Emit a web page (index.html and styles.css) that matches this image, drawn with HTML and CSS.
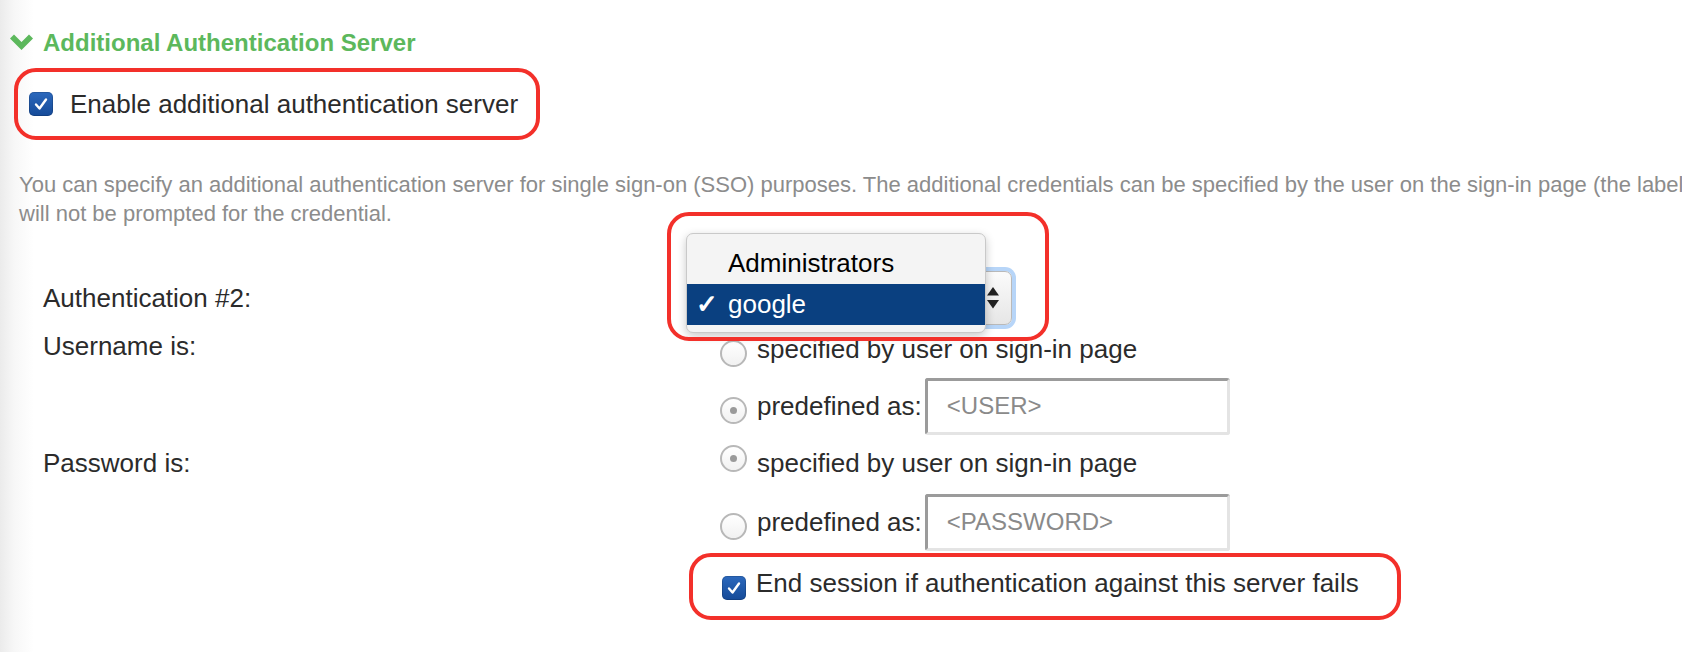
FILE: index.html
```html
<!DOCTYPE html>
<html lang="en">
<head>
<meta charset="utf-8">
<title>Additional Authentication Server</title>
<link rel="stylesheet" href="styles.css">
</head>
<body>
<div class="page">
  <div class="section-head">
    <svg class="chevron" width="23" height="16" viewBox="0 0 23 16"><polygon points="0,4.5 4,0.5 11.5,8 19,0.5 23,4.5 11.5,16" fill="#5cb85c"/></svg>
    <span class="section-title">Additional Authentication Server</span>
  </div>

  <div class="enable-box">
    <span class="checkbox"><svg width="24" height="24" viewBox="0 0 24 24"><polyline points="7,12.5 10.5,16.5 17,7.5" fill="none" stroke="#fff" stroke-width="2.4" stroke-linecap="round" stroke-linejoin="round"/></svg></span>
    <span class="enable-label">Enable additional authentication server</span>
  </div>

  <p class="desc">You can specify an additional authentication server for single sign-on (SSO) purposes. The additional credentials can be specified by the user on the sign-in page (the label is specified below) or predefined, in which case the user<br>will not be prompted for the credential.</p>

  <div class="form">
    <div class="label r1">Authentication #2:</div>
    <div class="control r1">
      <div class="select"><span class="arrows"><svg width="12" height="22" viewBox="0 0 12 22"><polygon points="6,0 12,8.5 0,8.5" fill="#222"/><polygon points="0,13 12,13 6,21.5" fill="#222"/></svg></span></div>
    </div>

    <div class="label r2">Username is:</div>
    <div class="control r2">
      <span class="radio"></span><span class="opt">specified by user on sign-in page</span>
    </div>
    <div class="control r3">
      <span class="radio checked"></span><span class="opt">predefined as:</span>
      <div class="text-input">&lt;USER&gt;</div>
    </div>

    <div class="label r4">Password is:</div>
    <div class="control r4">
      <span class="radio checked up"></span><span class="opt">specified by user on sign-in page</span>
    </div>
    <div class="control r5">
      <span class="radio"></span><span class="opt">predefined as:</span>
      <div class="text-input">&lt;PASSWORD&gt;</div>
    </div>

    <div class="control r6">
      <span class="checkbox small"><svg width="24" height="24" viewBox="0 0 24 24"><polyline points="7,12.5 10.5,16.5 17,7.5" fill="none" stroke="#fff" stroke-width="2.4" stroke-linecap="round" stroke-linejoin="round"/></svg></span>
      <span class="opt end">End session if authentication against this server fails</span>
    </div>

    <div class="popup">
      <div class="popup-item">Administrators</div>
      <div class="popup-item selected"><span class="tick">✓</span>google</div>
    </div>
    <div class="mark mark-select"></div>
    <div class="mark mark-end"></div>
  </div>
</div>
</body>
</html>
```

FILE: styles.css
```css
* { box-sizing: border-box; }

html, body {
  margin: 0;
  padding: 0;
  height: 100%;
}

body {
  font-family: "Liberation Sans", Helvetica, Arial, sans-serif;
  color: #333;
  background: linear-gradient(to right, #ebebeb 0, #f7f7f7 14px, #ffffff 34px);
  overflow: hidden;
}

.page {
  padding-top: 31px;
}

.section-head {
  display: flex;
  align-items: center;
  gap: 10px;
  padding-left: 10px;
  height: 24px;
}

.chevron { display: block; margin-top: -3px; }

.section-title {
  font-size: 24px;
  font-weight: bold;
  color: #5cb85c;
  line-height: 24px;
}

.enable-box {
  display: flex;
  align-items: center;
  width: fit-content;
  height: 72px;
  margin: 13px 0 0 14px;
  padding: 0 18px 0 11px;
  border: 4px solid #f3302a;
  border-radius: 22px;
  gap: 17px;
}

.checkbox {
  display: block;
  width: 24px;
  height: 24px;
  border-radius: 5px;
  background: linear-gradient(#2c69bd, #154a98);
  box-shadow: inset 0 0 0 1px rgba(0,0,0,0.15);
}
.checkbox svg { display: block; }

.enable-label {
  font-size: 26px;
  line-height: 30px;
  color: #2b2b2b;
}

.desc {
  margin: 30px 0 0;
  padding-left: 19px;
  font-size: 22px;
  line-height: 29px;
  color: #8c8c8c;
  white-space: nowrap;
}

.form {
  position: relative;
  margin-top: 42px;
  padding-left: 43px;
  display: grid;
  grid-template-columns: 677px 1fr;
  grid-template-rows: 56px 46px 68px 46px 72px 54px;
}

.label {
  grid-column: 1;
  display: flex;
  align-items: center;
  font-size: 26px;
  color: #2b2b2b;
}
.label.r2 { padding-bottom: 6px; }

.control {
  grid-column: 2;
  display: flex;
  align-items: center;
  font-size: 26px;
  color: #2b2b2b;
}

.r1 { grid-row: 1; }
.r2 { grid-row: 2; }
.r3 { grid-row: 3; }
.r4 { grid-row: 4; }
.r5 { grid-row: 5; }
.r6 { grid-row: 6; }

.select {
  width: 292px;
  height: 54px;
  border: 1px solid #b9b9b9;
  border-radius: 7px;
  background: linear-gradient(#fbfbfb, #e6e6e6);
  box-shadow: 0 0 0 4px #b7d5f8;
  display: flex;
  align-items: center;
  justify-content: flex-end;
  padding-right: 12px;
}
.arrows svg { display: block; }

.radio {
  flex: none;
  width: 27px;
  height: 27px;
  border-radius: 50%;
  border: 2px solid #b8b8b8;
  background: linear-gradient(#ffffff, #f1f1f1);
  margin-right: 10px;
  margin-top: 8px;
  position: relative;
}
.radio.checked::after {
  content: "";
  position: absolute;
  left: 50%;
  top: 50%;
  width: 7px;
  height: 7px;
  margin: -3.5px 0 0 -3.5px;
  border-radius: 50%;
  background: #9a9a9a;
}
.radio.up { margin-top: -10px; }

.opt { line-height: 30px; white-space: nowrap; }

.text-input {
  margin-left: 3px;
  width: 305px;
  height: 57px;
  border: 3px solid;
  border-color: #9b9b9b #e4e4e4 #e4e4e4 #9b9b9b;
  border-radius: 3px;
  background: #fff;
  padding-left: 19px;
  display: flex;
  align-items: center;
  font-size: 24px;
  color: #8a8a8a;
}

.checkbox.small { margin: 6px 10px 0 2px; flex: none; }
.opt.end { margin-top: -4px; }

.popup {
  position: absolute;
  left: 686px;
  top: -37px;
  width: 300px;
  height: 100px;
  padding: 8px 0;
  background: #f4f4f4;
  border: 1px solid #c9c9c9;
  border-radius: 7px;
  box-shadow: 0 3px 10px rgba(0,0,0,0.22);
  z-index: 2;
}
.popup-item {
  height: 42px;
  display: flex;
  align-items: center;
  padding-left: 41px;
  font-size: 26px;
  color: #000;
  position: relative;
}
.popup-item.selected {
  background: #0a4080;
  color: #fff;
  height: 41px;
}
.tick {
  position: absolute;
  left: 9px;
  font-size: 26px;
  font-weight: bold;
}

.mark {
  position: absolute;
  border: 4px solid #f3302a;
  border-radius: 22px;
  z-index: 3;
  pointer-events: none;
}
.mark-select {
  left: 667px;
  top: -58px;
  width: 382px;
  height: 129px;
}
.mark-end {
  left: 689px;
  top: 283px;
  width: 712px;
  height: 67px;
}
```
